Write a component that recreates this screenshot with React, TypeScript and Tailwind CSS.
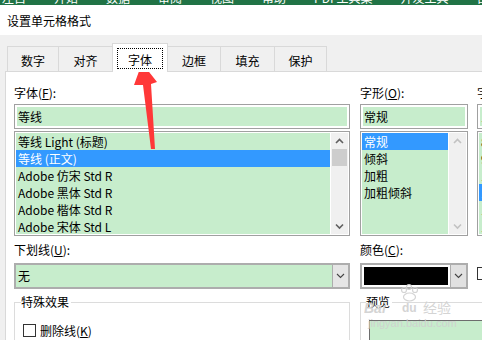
import React from 'react';

const GREEN = 'bg-[#c7edcc]';

function Chev({ dir, color }: { dir: 'up' | 'down'; color: string }) {
  const pts = dir === 'up' ? '1,5 4.5,1.5 8,5' : '1,1.5 4.5,5 8,1.5';
  return (
    <svg width="9" height="7" viewBox="0 0 9 7">
      <polyline points={pts} fill="none" stroke={color} strokeWidth="1.6" />
    </svg>
  );
}

function DropChev() {
  return (
    <svg width="9" height="6" viewBox="0 0 9 6">
      <polyline points="1,1 4.5,4.5 8,1" fill="none" stroke="#444" strokeWidth="1.1" />
    </svg>
  );
}

function Label({ children }: { children: React.ReactNode }) {
  return <div className="h-[14px] leading-[14px] whitespace-nowrap">{children}</div>;
}

function Input({ text }: { text: string }) {
  return (
    <div className="mt-[4px] h-[25px] border border-[#a0a0a0] bg-white p-[2px]">
      <div className={`h-full ${GREEN} pl-px leading-[19px] whitespace-nowrap`}>{text}</div>
    </div>
  );
}

function ListBox({
  items,
  selected,
  active,
  thumb,
}: {
  items: string[];
  selected: number;
  active: boolean;
  thumb: boolean;
}) {
  const c = active ? '#606060' : '#c2c2c2';
  return (
    <div className="mt-[2px] h-[105px] border border-[#a0a0a0] bg-white p-px flex">
      <div className={`flex-1 ${GREEN} overflow-hidden mr-px`}>
        {items.map((t, i) => (
          <div
            key={i}
            className={`h-[17px] leading-[17px] pl-[2px] whitespace-nowrap ${
              i === selected ? 'bg-[#3399ff] text-white' : ''
            }`}
          >
            {t}
          </div>
        ))}
      </div>
      <div className="w-[17px] bg-[#f0f0f0] flex flex-col">
        <div className="h-[16px] flex items-center justify-center">
          <Chev dir="up" color={c} />
        </div>
        {thumb ? <div className="h-[17px] mx-[1px] bg-[#cdcdcd]" /> : null}
        <div className="flex-1" />
        <div className="h-[16px] flex items-center justify-center">
          <Chev dir="down" color={c} />
        </div>
      </div>
    </div>
  );
}

export default function App() {
  return (
    <div className="relative w-[482px] h-[340px] overflow-hidden bg-[#f0f0f0] font-['Noto_Sans_CJK_SC',sans-serif] text-[12px] text-black">
      <div className="h-[5px] bg-[#217346] overflow-hidden flex gap-[28px] pl-[2px] text-white text-[12px] leading-[12px]">
        {['左自', '开始', '数据', '审阅', '视图', '帮助', 'PDF工具集', '开发工具', '百度'].map((t, i) => (
          <span key={i} className="-mt-[8px] shrink-0">
            {t}
          </span>
        ))}
      </div>
      <div className="h-[30px] bg-white flex items-center pl-[7px] pt-[2px]">设置单元格格式</div>

      <div className="h-[36px] flex items-end pl-[7px]">
        <div className="w-[51px] h-[25px] border-t border-l border-[#d9d9d9] flex items-center justify-center pt-[3px]">
          数字
        </div>
        <div className="w-[54px] h-[25px] border-t border-l border-[#d9d9d9] flex items-center justify-center pt-[3px]">
          对齐
        </div>
        <div className="relative z-10 -mb-px w-[56px] h-[29px] bg-white border-t border-x border-[#d9d9d9] pt-[4px] px-[4px]">
          <div className="w-[46px] h-[21px] border border-dotted border-black flex items-center justify-center pt-[2px]">
            字体
          </div>
        </div>
        <div className="w-[52px] h-[25px] border-t border-[#d9d9d9] flex items-center justify-center pt-[3px]">
          边框
        </div>
        <div className="w-[54px] h-[25px] border-t border-l border-[#d9d9d9] flex items-center justify-center pt-[3px]">
          填充
        </div>
        <div className="w-[53px] h-[25px] border-t border-x border-[#d9d9d9] flex items-center justify-center pt-[3px]">
          保护
        </div>
      </div>

      <div className="ml-[5px] w-[600px] h-[300px] bg-white border-l border-t border-[#d9d9d9] pl-[8px] pt-[14px]">
        {/* Row A */}
        <div className="flex">
          <div className="w-[336px] shrink-0">
            <Label>
              字体(<span className="underline">F</span>):
            </Label>
            <Input text="等线" />
            <ListBox
              items={['等线 Light (标题)', '等线 (正文)', 'Adobe 仿宋 Std R', 'Adobe 黑体 Std R', 'Adobe 楷体 Std R', 'Adobe 宋体 Std L']}
              selected={1}
              active
              thumb
            />
          </div>
          <div className="w-[108px] shrink-0 ml-[10px]">
            <Label>
              字形(<span className="underline">O</span>):
            </Label>
            <Input text="常规" />
            <ListBox items={['常规', '倾斜', '加粗', '加粗倾斜']} selected={0} active={false} thumb={false} />
          </div>
          <div className="w-[100px] shrink-0 ml-[9px]">
            <Label>
              字号(<span className="underline">S</span>):
            </Label>
            <Input text="  11" />
            <ListBox items={['   8', '   9', '   10', '   11', '   12', '   14']} selected={3} active thumb />
          </div>
        </div>

        {/* Row B */}
        <div className="flex mt-[7px]">
          <div className="w-[336px] shrink-0">
            <Label>
              下划线(<span className="underline">U</span>):
            </Label>
            <div className={`mt-[6px] h-[26px] border-2 border-[#adadad] ${GREEN} flex`}>
              <div className="flex-1 pl-[2px] leading-[22px]">无</div>
              <div className="w-[16px] bg-[#e5e5e5] border-l border-[#adadad] flex items-center justify-center">
                <DropChev />
              </div>
            </div>
          </div>
          <div className="w-[108px] shrink-0 ml-[10px]">
            <Label>
              颜色(<span className="underline">C</span>):
            </Label>
            <div className="mt-[6px] h-[26px] border-2 border-[#adadad] bg-white flex">
              <div className="flex-1 p-[2px]">
                <div className="h-full bg-black" />
              </div>
              <div className="w-[16px] bg-[#e1e1e1] border-l border-[#adadad] flex items-center justify-center">
                <DropChev />
              </div>
            </div>
          </div>
          <div className="w-[100px] shrink-0 ml-[9px] pt-[24px] flex items-start gap-[5px]">
            <div className="w-[13px] h-[13px] border border-[#333] bg-white shrink-0" />
            <span className="leading-[13px] whitespace-nowrap">普通字体(N)</span>
          </div>
        </div>

        {/* Row C */}
        <div className="flex mt-[6px]">
          <fieldset className="w-[336px] h-[60px] shrink-0 border border-[#dcdcdc] px-[6px]">
            <legend className="leading-[14px] pr-[2px]">特殊效果</legend>
            <div className="mt-[15px] ml-[2px] flex items-center gap-[4px]">
              <div className="w-[13px] h-[13px] border border-[#333] bg-white shrink-0" />
              <span className="leading-[13px]">
                删除线(<span className="underline">K</span>)
              </span>
            </div>
          </fieldset>
          <fieldset className="w-[250px] h-[60px] shrink-0 ml-[10px] border border-[#dcdcdc] px-[5px]">
            <legend className="leading-[14px] pr-[2px]">预览</legend>
            <div className={`mt-[11px] ml-[3px] w-[200px] h-[40px] ${GREEN} border-t border-l border-[#6d6d6d]`} />
          </fieldset>
        </div>
      </div>

      {/* red arrow annotation */}
      <svg className="absolute left-0 top-0 pointer-events-none" width="482" height="340" viewBox="0 0 482 340">
        <polygon points="142,63 157,82 151,84 155,149 151,149 143,85 134,85" fill="#ff3838" />
      </svg>

      {/* watermark */}
      <div className="absolute left-[364px] top-[284px] pointer-events-none text-[#d0d0d0] opacity-90">
        <svg className="absolute left-[35px] top-0" width="22" height="18" viewBox="0 0 22 18">
          <circle cx="5" cy="6" r="2.5" fill="none" stroke="#d0d0d0" strokeWidth="1.2" />
          <circle cx="10" cy="3" r="2.5" fill="none" stroke="#d0d0d0" strokeWidth="1.2" />
          <circle cx="16" cy="6" r="2.5" fill="none" stroke="#d0d0d0" strokeWidth="1.2" />
          <ellipse cx="10.5" cy="13" rx="6" ry="4" fill="none" stroke="#d0d0d0" strokeWidth="1.2" />
        </svg>
        <div className="absolute left-0 top-[17px] text-[14px] leading-[14px] font-bold italic whitespace-nowrap font-['Liberation_Sans',sans-serif]">
          Bai
        </div>
        <div className="absolute left-[38px] top-[18px] text-[12px] leading-[13px] font-bold whitespace-nowrap font-['Liberation_Sans',sans-serif]">
          du
        </div>
        <div className="absolute left-[59px] top-[16px] text-[14px] leading-[15px] whitespace-nowrap">经验</div>
        <div className="absolute left-[4px] top-[34px] text-[11px] leading-[11px] whitespace-nowrap font-['Liberation_Sans',sans-serif]">
          jingyan.baidu.com
        </div>
      </div>
    </div>
  );
}
